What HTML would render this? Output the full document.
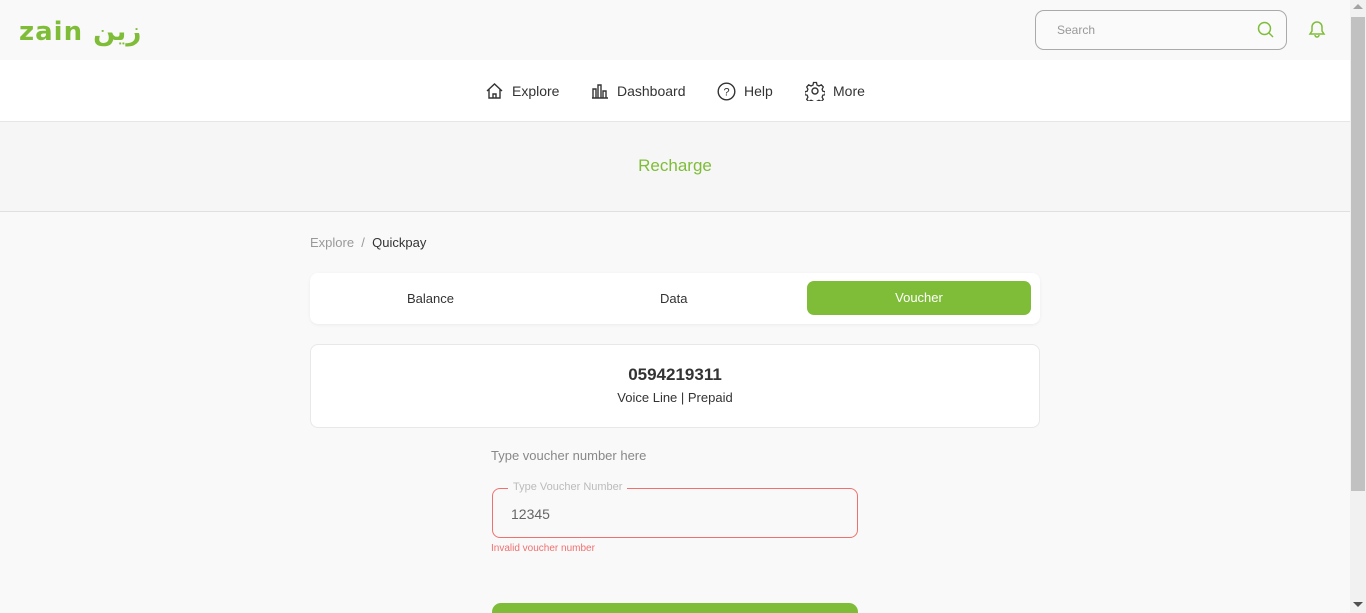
<!DOCTYPE html>
<html><head><meta charset="utf-8"><style>
*{box-sizing:border-box;margin:0;padding:0}
html,body{width:1366px;height:613px;overflow:hidden}
body{background:#f9f9f9;font-family:"Liberation Sans",sans-serif;position:relative;color:#333}
.abs{position:absolute}
.sb{left:1350px;top:0;width:16px;height:613px;background:#f1f1f1}
.thumb{left:1351px;top:17px;width:14px;height:474px;background:#c1c1c1}
.nav{left:0;top:60px;width:1350px;height:62px;background:#fff;border-bottom:1px solid #e6e6e6}
.ni{top:81px;height:20px;font-size:14px;color:#333;display:flex;align-items:center;gap:8px;line-height:20px}
.hero{left:0;top:122px;width:1350px;height:90px;background:#f6f6f6;border-bottom:1px solid #e0e0e0;text-align:center;line-height:88px;color:#7fbd39;font-size:17px}
.card{background:#fff;border-radius:8px}
</style></head><body>
<div class="abs" style="left:19px;top:12px;font-size:26px;line-height:36px;font-weight:bold;color:#7fbd39;letter-spacing:1px;font-family:'DejaVu Sans',sans-serif">zain <span style="font-family:'Noto Sans CJK SC','DejaVu Sans',sans-serif">زين</span></div>
<div class="abs" style="left:1035px;top:10px;width:252px;height:40px;border:1px solid #aaa;border-radius:9px;background:#fafafa"></div>
<div class="abs" style="left:1057px;top:23px;font-size:12px;color:#999">Search</div>
<svg class="abs" style="left:1256px;top:20px" width="20" height="20" viewBox="0 0 20 20"><circle cx="8.5" cy="8.5" r="6" fill="none" stroke="#7fbd39" stroke-width="1.5"/><path d="M13 13l4 4" stroke="#7fbd39" stroke-width="1.5"/></svg>
<svg class="abs" style="left:1306px;top:18px" width="22" height="22" viewBox="0 0 22 22"><path d="M4 16h14l-2-3V9a5 5 0 0 0-10 0v4z M9 17a2 2 0 0 0 4 0" fill="none" stroke="#7fbd39" stroke-width="1.5"/></svg>
<div class="abs nav"></div>
<div class="abs ni" style="left:485px"><svg width="19" height="18" viewBox="0 0 19 18"><path d="M2 9L9.5 2 17 9M4 7.5V16h11V7.5M8 16v-4h3v4" fill="none" stroke="#333" stroke-width="1.4"/></svg>Explore</div>
<div class="abs ni" style="left:591px"><svg width="18" height="16" viewBox="0 0 18 16"><path d="M1 15h16M2 15V6h3v9M7 15V2h3v13M12 15V8h3v7" fill="none" stroke="#333" stroke-width="1.4"/></svg>Dashboard</div>
<div class="abs ni" style="left:717px"><svg width="19" height="19" viewBox="0 0 19 19"><circle cx="9.5" cy="9.5" r="8.3" fill="none" stroke="#333" stroke-width="1.4"/><text x="9.5" y="13.5" font-size="11" text-anchor="middle" fill="#333" font-family="Liberation Sans">?</text></svg>Help</div>
<div class="abs ni" style="left:805px"><svg width="20" height="20" viewBox="0 0 20 20"><circle cx="10" cy="10" r="3" fill="none" stroke="#333" stroke-width="1.4"/><path d="M8.5 1.5h3l.5 2.5 2 1 2.3-1.2 2 2.2-1.2 2.2.7 2 2.4.5v3l-2.4.5-.7 2 1.2 2.2-2 2-2.3-1.2-2 1-.5 2.5h-3l-.5-2.5-2-1-2.3 1.2-2-2 1.2-2.2-.7-2-2.4-.5v-3l2.4-.5.7-2-1.2-2.2 2-2.2 2.3 1.2 2-1z" fill="none" stroke="#333" stroke-width="1.3"/></svg>More</div>
<div class="abs hero">Recharge</div>
<div class="abs" style="left:310px;top:235px;font-size:13px;color:#999">Explore &nbsp;/&nbsp; <span style="color:#333">Quickpay</span></div>
<div class="abs card" style="left:310px;top:273px;width:730px;height:51px;box-shadow:0 1px 3px rgba(0,0,0,.06)"></div>
<div class="abs" style="left:407px;top:291px;font-size:13px">Balance</div>
<div class="abs" style="left:660px;top:291px;font-size:13px">Data</div>
<div class="abs" style="left:807px;top:281px;width:224px;height:34px;background:#7fbd39;border-radius:7px;color:#fff;font-size:13px;text-align:center;line-height:34px">Voucher</div>
<div class="abs card" style="left:310px;top:344px;width:730px;height:84px;border:1px solid #e8e8e8;text-align:center">
<div style="margin-top:20px;font-size:17px;font-weight:bold;color:#333">0594219311</div>
<div style="margin-top:5px;font-size:13px;color:#333">Voice Line | Prepaid</div></div>
<div class="abs" style="left:491px;top:448px;font-size:13px;color:#888">Type voucher number here</div>
<div class="abs" style="left:492px;top:488px;width:366px;height:50px;border:1px solid #f07070;border-radius:8px"></div>
<div class="abs" style="left:508px;top:481px;padding:0 5px;background:#f9f9f9;font-size:11px;color:#bbb">Type Voucher Number</div>
<div class="abs" style="left:511px;top:506px;font-size:14px;color:#666">12345</div>
<div class="abs" style="left:491px;top:543px;font-size:10px;color:#f07070">Invalid voucher number</div>
<div class="abs" style="left:492px;top:603px;width:366px;height:10px;background:#7fbd39;border-radius:9px 9px 0 0"></div>
<div class="abs sb"></div><div class="abs thumb"></div>
<div class="abs" style="left:1353px;top:4px;width:0;height:0;border:5px solid transparent;border-bottom:5px solid #a3a3a3;border-top:0"></div>
<div class="abs" style="left:1353px;top:602px;width:0;height:0;border:5px solid transparent;border-top:5px solid #505050;border-bottom:0"></div>
</body></html>
